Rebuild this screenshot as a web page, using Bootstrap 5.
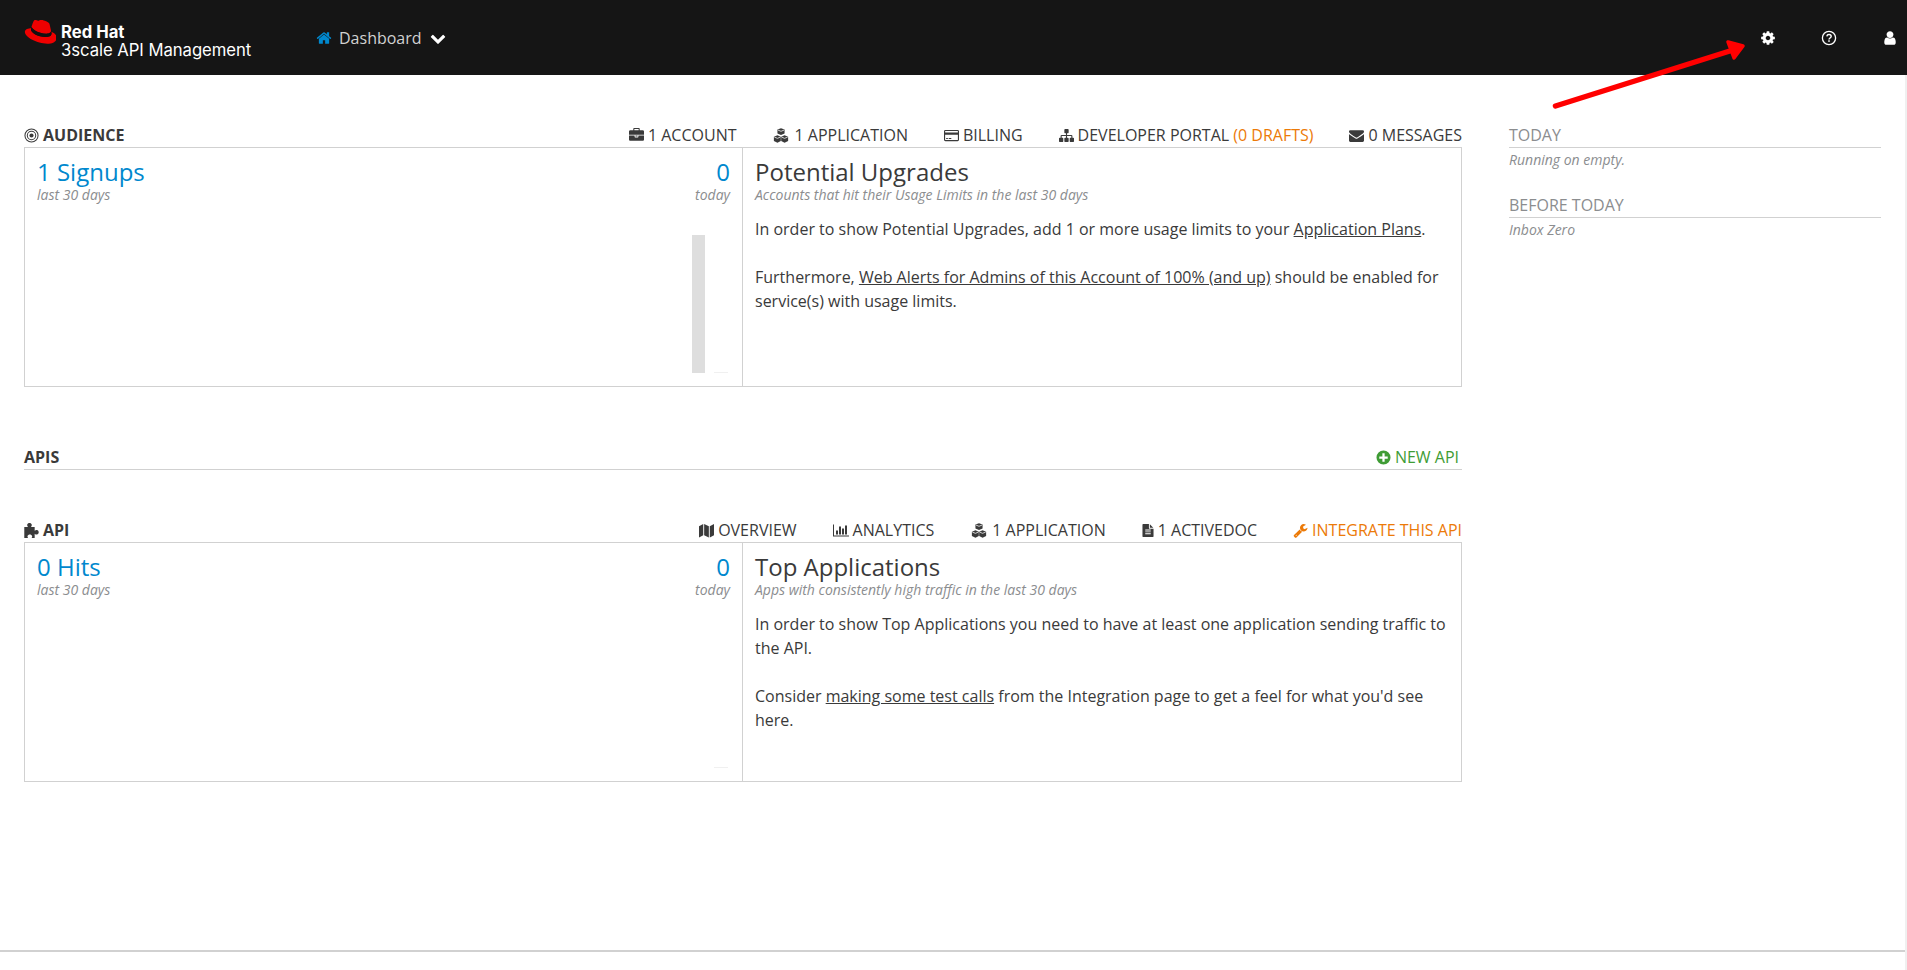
<!DOCTYPE html>
<html lang="en">
  <head>
    <meta charset="UTF-8" />
    <meta name="viewport" content="width=device-width, initial-scale=1.0" />
    <title>Dashboard | Red Hat 3scale API Management</title>
    <link
      href="https://cdn.jsdelivr.net/npm/bootstrap@5.3.3/dist/css/bootstrap.min.css"
      rel="stylesheet"
    />
    <style>
      html,
      body {
        height: 970px;
        overflow: hidden;
      }

      body {
        margin: 0;
        font-family: "Open Sans", "Liberation Sans", sans-serif;
        font-size: 16px;
        line-height: 24px;
        color: #3a3a3a;
        background: #f0f0f0;
      }

      .ico {
        width: 1em;
        height: 1em;
        fill: currentColor;
        flex: none;
      }

      /* top bar */
      .top-bar {
        height: 75px;
        background: #151515;
        padding: 0 9px 0 24px;
      }

      .brand-block {
        width: 292px;
        flex: none;
        color: #fff;
        font-family: Inter, "Liberation Sans", sans-serif;
        gap: 5px;
      }

      .brand-hat {
        width: 32px;
        height: 24px;
        margin-top: -12px;
        flex: none;
      }

      .brand-text {
        line-height: 18px;
        font-size: 16.7px;
        letter-spacing: -0.05px;
        padding-top: 6px;
        white-space: nowrap;
      }

      .brand-text b {
        display: block;
        font-weight: 700;
        letter-spacing: 0;
      }

      .dash-menu {
        color: #d1d1d1;
        gap: 8px;
      }

      .dash-menu .ico-home {
        color: #0088ce;
        font-size: 16px;
        margin-right: -1px;
      }

      .dash-menu .ico-chev {
        color: #fff;
        font-size: 16px;
      }

      .top-tools {
        color: #fff;
        gap: 45px;
        font-size: 16px;
      }

      /* page */
      .page-wrap {
        width: 1905px;
        height: 875px;
        background: #fff;
      }

      .page-cols {
        height: 875px;
        padding: 48px 24px 0;
        gap: 47px;
      }

      .main-col {
        width: 1438px;
      }

      .side-col {
        width: 372px;
      }

      .foot-rule {
        position: absolute;
        left: 0;
        top: 950px;
        width: 1905px;
        border-top: 2px solid #d1d1d1;
      }

      .white-foot {
        position: absolute;
        left: 0;
        top: 952px;
        width: 1905px;
        height: 18px;
        background: #fff;
      }

      .sec-head {
        height: 24px;
        white-space: nowrap;
      }

      .sec-title {
        font-weight: 700;
        gap: 4px;
        color: #3a3a3a;
      }

      .sec-title .ico {
        font-size: 15px;
      }

      .sec-links {
        gap: 36px;
      }

      .sec-link {
        gap: 4px;
      }

      .sec-link .ico {
        font-size: 15px;
      }

      .sec-link .ico-wide {
        width: 18px;
      }

      .sec-link .ico-bars {
        width: 16px;
      }

      .sec-link .ico-doc {
        width: 12px;
      }

      .tone-orange {
        color: #ec7a08;
      }

      .tone-green {
        color: #3f9c35;
      }

      .stat-box {
        height: 240px;
        border: 1px solid #d1d1d1;
      }

      .stat-left {
        width: 718px;
        padding: 9px 12px;
        border-right: 1px solid #d1d1d1;
      }

      .stat-right {
        flex: 1;
        padding: 9px 12px;
      }

      .stat-num {
        font-size: 24px;
        line-height: 30px;
        color: #0088ce;
      }

      .stat-sub {
        font-size: 14px;
        line-height: 16px;
        font-style: italic;
        color: #8b8d8f;
      }

      .stat-chart {
        height: 138px;
        margin-top: 32px;
        gap: 9px;
        padding-right: 2px;
      }

      .chart-bar {
        width: 13px;
        background: #dedede;
      }

      .chart-tick {
        width: 14px;
        height: 1px;
        background: #f0f0f0;
      }

      .panel-title {
        font-size: 24px;
        line-height: 30px;
        font-weight: 400;
        margin: 0;
        color: #3a3a3a;
      }

      .panel-copy {
        margin: 14px 0 0;
      }

      .panel-copy + .panel-copy {
        margin-top: 24px;
      }

      .panel-copy a {
        color: #3a3a3a;
      }

      .apis-head {
        margin-top: 58px;
        height: 25px;
        border-bottom: 1px solid #d1d1d1;
        padding-right: 3px;
      }

      .api-head {
        margin-top: 48px;
      }

      .side-title {
        height: 24px;
        color: #8b8d8f;
        border-bottom: 1px solid #d1d1d1;
        box-sizing: content-box;
      }

      .side-note {
        font-size: 14px;
        line-height: 23px;
        font-style: italic;
        color: #8b8d8f;
        margin-bottom: 22px;
      }

      .red-arrow {
        position: absolute;
        left: 1540px;
        top: 30px;
        width: 220px;
        height: 90px;
      }
    </style>
  </head>
  <body>
    <svg width="0" height="0" class="d-block position-absolute">
      <symbol id="i-cog" viewBox="0 0 1792 1792"><path d="M1152 896q0-106-75-181t-181-75-181 75-75 181 75 181 181 75 181-75 75-181zm512-109v222q0 12-8 23t-20 13l-185 28q-19 54-39 91 35 50 107 138 10 12 10 25t-9 23q-27 37-99 108t-94 71q-12 0-26-9l-138-108q-44 23-91 38-16 136-29 186-7 28-36 28h-222q-14 0-24.5-8.5t-11.5-21.5l-28-184q-49-16-90-37l-141 107q-10 9-25 9-14 0-25-11-126-114-165-168-7-10-7-23 0-12 8-23 15-21 51-66.5t54-70.5q-27-50-41-99l-183-27q-13-2-21-12.5t-8-23.5v-222q0-12 8-23t19-13l186-28q14-46 39-92-40-57-107-138-10-12-10-24 0-10 9-23 26-36 98.5-107.5t94.5-71.5q13 0 26 10l138 107q44-23 91-38 16-136 29-186 7-28 36-28h222q14 0 24.5 8.5t11.5 21.5l28 184q49 16 90 37l142-107q9-9 24-9 13 0 25 10 129 119 165 170 7 8 7 22 0 12-8 23-15 21-51 66.5t-54 70.5q26 50 41 98l183 28q13 2 21 12.5t8 23.5z"/></symbol>
      <symbol id="i-home" viewBox="0 0 1792 1792"><path d="M1472 992v480q0 26-19 45t-45 19h-384v-384h-256v384h-384q-26 0-45-19t-19-45v-480q0-1 .5-3t.5-3l575-474 575 474q1 2 1 6zm223-69l-62 74q-8 9-21 11h-3q-13 0-21-7l-692-577-692 577q-12 8-24 7-13-2-21-11l-62-74q-8-10-7-23.5t11-21.5l719-599q32-26 76-26t76 26l244 204v-195q0-14 9-23t23-9h192q14 0 23 9t9 23v408l219 182q10 8 11 21.5t-7 23.5z"/></symbol>
      <symbol id="i-user" viewBox="0 0 1792 1792"><path d="M1536 1399q0 109-62.5 187t-150.5 78h-854q-88 0-150.5-78t-62.5-187q0-85 8.5-160.5t31.5-152 58.5-131 94-89 134.5-34.5q131 128 313 128t313-128q76 0 134.5 34.5t94 89 58.5 131 31.5 152 8.5 160.5zm-256-887q0 159-112.5 271.5t-271.5 112.5-271.5-112.5-112.5-271.5 112.5-271.5 271.5-112.5 271.5 112.5 112.5 271.5z"/></symbol>
      <symbol id="i-chev" viewBox="0 0 1792 1792"><path d="M1683 808l-742 741q-19 19-45 19t-45-19l-742-741q-19-19-19-45.5t19-45.5l166-165q19-19 45-19t45 19l531 531 531-531q19-19 45-19t45 19l166 165q19 19 19 45.5t-19 45.5z"/></symbol>
      <symbol id="i-help" viewBox="0 0 16 16"><circle cx="8" cy="8" r="6.6" fill="none" stroke="currentColor" stroke-width="1.3"/><path d="M5.8 6.3c.2-1.2 1.1-1.8 2.2-1.8 1.3 0 2.2.8 2.2 1.8 0 1.7-2.2 1.6-2.2 3.2" fill="none" stroke="currentColor" stroke-width="1.4"/><rect x="7.2" y="10.3" width="1.6" height="1.5"/></symbol>
      <symbol id="i-case" viewBox="0 0 1792 1792"><path d="M640 256h512v-128h-512v128zm1152 640v480q0 66-47 113t-113 47h-1472q-66 0-113-47t-47-113v-480h672v160q0 26 19 45t45 19h320q26 0 45-19t19-45v-160h672zm-768 0v128h-256v-128h256zm768-480v384h-1792v-384q0-66 47-113t113-47h352v-160q0-40 28-68t68-28h576q40 0 68 28t28 68v160h352q66 0 113 47t47 113z"/></symbol>
      <symbol id="i-cubes" viewBox="0 0 16 16" preserveAspectRatio="xMidYMid meet"><path d="M8 .2l3.800 1.500v4.200L8 7.500 4.200 5.900V1.700zM4.200 7.800l3.600 1.500v4.500L4.200 15.800.4 13.800V9.300zM11.800 7.800l3.800 1.500v4.500l-3.800 2-3.600-2V9.300z"/><path d="M4.800 2.200L8 3.500l3.200-1.300M.9 9.700l3.300 1.300 3.100-1.300M8.700 9.700l3.100 1.300 3.300-1.300" fill="none" stroke="#fff" stroke-width=".8"/></symbol>
      <symbol id="i-card" viewBox="0 0 16 16"><path d="M1.500 2h13A1.500 1.500 0 0 1 16 3.500v9a1.500 1.500 0 0 1-1.500 1.500h-13A1.500 1.500 0 0 1 0 12.500v-9A1.500 1.500 0 0 1 1.500 2zM1.200 7.200v5.300c0 .2.100.3.300.3h13c.2 0 .3-.1.300-.3V7.200zM1.200 3.500v1.300h13.600V3.500c0-.2-.1-.3-.3-.3h-13c-.2 0-.3.100-.3.300zM2.300 10.700h1.800v1H2.300zM5 10.700h2.800v1H5z"/></symbol>
      <symbol id="i-site" viewBox="0 0 1792 1792"><path d="M1792 1248v320q0 40-28 68t-68 28h-320q-40 0-68-28t-28-68v-320q0-40 28-68t68-28h96v-192h-512v192h96q40 0 68 28t28 68v320q0 40-28 68t-68 28h-320q-40 0-68-28t-28-68v-320q0-40 28-68t68-28h96v-192h-512v192h96q40 0 68 28t28 68v320q0 40-28 68t-68 28h-320q-40 0-68-28t-28-68v-320q0-40 28-68t68-28h96v-192q0-52 38-90t90-38h512v-192h-96q-40 0-68-28t-28-68v-320q0-40 28-68t68-28h320q40 0 68 28t28 68v320q0 40-28 68t-68 28h-96v192h512q52 0 90 38t38 90v192h96q40 0 68 28t28 68z"/></symbol>
      <symbol id="i-mail" viewBox="0 0 1792 1792"><path d="M1792 710v794q0 66-47 113t-113 47h-1472q-66 0-113-47t-47-113v-794q44 49 101 87 362 246 497 345 57 42 92.5 65.5t94.5 48 110 24.5h2q51 0 110-24.5t94.5-48 92.5-65.5q170-123 498-345 57-39 100-87zm0-294q0 79-49 151t-122 123q-376 261-468 325-10 7-42.5 30.5t-54 38-52 32.5-57.5 27-50 9h-2q-23 0-50-9t-57.5-27-52-32.5-54-38-42.5-30.5q-91-64-262-182.500t-205-142.500q-62-42-117-115.500t-55-136.500q0-78 41.500-130t118.500-52h1472q65 0 112.500 47t47.500 113z"/></symbol>
      <symbol id="i-map" viewBox="0 0 16 16"><path d="M0 3.500L4.500 1v12L0 15.500zM5.500 1l5 2.500v12l-5-2.500zM11.500 3.500L16 1v12l-4.500 2.500z"/></symbol>
      <symbol id="i-bars" viewBox="0 0 2048 1792"><path d="M640 896v512h-256v-512h256zm384-512v1024h-256v-1024h256zm1024 1152v128h-2048v-1536h128v1408h1920zm-640-896v768h-256v-768h256zm384-384v1152h-256v-1152h256z"/></symbol>
      <symbol id="i-doc" viewBox="64 0 1664 1792"><path d="M1596 476q14 14 28 36h-472v-472q22 14 36 28zm-476 164h544v1056q0 40-28 68t-68 28h-1344q-40 0-68-28t-28-68v-1600q0-40 28-68t68-28h800v544q0 40 28 68t68 28zm160 736v-64q0-14-9-23t-23-9h-704q-14 0-23 9t-9 23v64q0 14 9 23t23 9h704q14 0 23-9t9-23zm0-256v-64q0-14-9-23t-23-9h-704q-14 0-23 9t-9 23v64q0 14 9 23t23 9h704q14 0 23-9t9-23zm0-256v-64q0-14-9-23t-23-9h-704q-14 0-23 9t-9 23v64q0 14 9 23t23 9h704q14 0 23-9t9-23z"/></symbol>
      <symbol id="i-wrench" viewBox="0 0 1792 1792"><path d="M448 1472q0-26-19-45t-45-19-45 19-19 45 19 45 45 19 45-19 19-45zm644-420l-682 682q-37 37-90 37-52 0-91-37l-106-108q-38-36-38-90 0-53 38-91l681-681q39 98 114.500 173.500t173.500 114.500zm634-435q0 39-23 106-47 134-164.500 217.500t-258.500 83.500q-185 0-316.500-131.500t-131.500-316.500 131.500-316.500 316.500-131.500q58 0 121.500 16.500t107.500 46.500q16 11 16 28t-16 28l-293 169v224l193 107q5-3 79-48.500t135.500-81 70.500-35.500q15 0 23.500 10t8.500 25z"/></symbol>
      <symbol id="i-puzzle" viewBox="1 1.500 12.500 13"><path d="M1 5h3.200C3.600 4.300 3.400 3.700 3.500 3.100 3.700 2 4.600 1.500 5.500 1.500S7.300 2 7.500 3.100c.1.600-.1 1.200-.7 1.900H10v3.200c.7-.6 1.300-.8 1.900-.7 1.100.2 1.600 1.100 1.600 2s-.5 1.800-1.600 2c-.6.1-1.200-.1-1.900-.7V14.500H7.300c.5-.7.600-1.200.5-1.700-.2-.9-1.100-1.400-2-1.400s-1.800.5-2 1.400c-.1.500 0 1 .5 1.700H1z"/></symbol>
      <symbol id="i-plus" viewBox="0 0 16 16"><path fill-rule="evenodd" d="M8 .5a7.500 7.500 0 1 1 0 15 7.500 7.500 0 0 1 0-15zM6.800 3.500v3.300H3.500v2.400h3.300v3.300h2.400V9.200h3.300V6.800H9.200V3.500z"/></symbol>
      <symbol id="i-target" viewBox="0 0 16 16"><circle cx="8" cy="8" r="7" fill="none" stroke="currentColor" stroke-width="1.100"/><circle cx="8" cy="8" r="4.500" fill="none" stroke="currentColor" stroke-width="1.100"/><circle cx="8" cy="8" r="2.200"/></symbol>
    </svg>

    <nav class="top-bar d-flex align-items-center">
      <div class="brand-block d-flex align-items-center">
        <svg class="brand-hat" viewBox="0 0 33 24" aria-hidden="true">
          <path fill="#e00" d="M22.500 13.800c2.200 0 5.400-.5 5.400-3 0-.2 0-.4-.1-.6l-1.300-5.700C26.200 3.200 26 2.600 23.800 1.500 22.100.6 18.400-.800 17.300-.800 16.300-.800 16 .5 14.800.5c-1.100 0-2-1-3.100-1-1 0-1.700.7-2.200 2.100 0 0-1.500 4.200-1.700 4.800v.4c0 1.600 6.300 6.900 14.700 6.900z"/>
          <path fill="#e00" d="M28.100 11.800c.3 1.400.3 1.500.3 1.700 0 2.400-2.700 3.700-6.200 3.700-8 0-15-4.700-15-7.800 0-.4.100-.9.300-1.300C4.600 8.300.9 8.800.9 12.100c0 5.400 12.800 12 23 12 7.800 0 9.800-3.500 9.800-6.300 0-2.200-1.900-4.700-5.600-6z"/>
          <path fill="#111" d="M28.100 11.800c.3 1.400.3 1.500.3 1.700 0 2.400-2.700 3.700-6.200 3.700-8 0-15-4.700-15-7.800 0-.4.100-.9.300-1.300l.6-1.600v.4c0 1.600 6.300 6.900 14.700 6.900 2.200 0 5.400-.5 5.400-3 0-.2 0-.4-.1-.6z"/>
        </svg>
        <div class="brand-text"><b>Red Hat</b>3scale API Management</div>
      </div>
      <div class="dash-menu d-flex align-items-center">
        <svg class="ico ico-home"><use href="#i-home" /></svg>
        <span>Dashboard</span>
        <svg class="ico ico-chev"><use href="#i-chev" /></svg>
      </div>
      <div class="top-tools d-flex align-items-center ms-auto">
        <svg class="ico"><use href="#i-cog" /></svg>
        <svg class="ico"><use href="#i-help" /></svg>
        <svg class="ico"><use href="#i-user" /></svg>
      </div>
    </nav>

    <div class="page-wrap">
      <div class="page-cols d-flex">
        <main class="main-col">
          <div class="sec-head d-flex justify-content-between align-items-center">
            <div class="sec-title d-flex align-items-center">
              <svg class="ico"><use href="#i-target" /></svg>AUDIENCE
            </div>
            <div class="sec-links d-flex">
              <span class="sec-link d-flex align-items-center"><svg class="ico"><use href="#i-case" /></svg>1 ACCOUNT</span>
              <span class="sec-link d-flex align-items-center"><svg class="ico ico-wide"><use href="#i-cubes" /></svg>1 APPLICATION</span>
              <span class="sec-link d-flex align-items-center"><svg class="ico"><use href="#i-card" /></svg>BILLING</span>
              <span class="sec-link d-flex align-items-center"><svg class="ico"><use href="#i-site" /></svg><span>DEVELOPER PORTAL <span class="tone-orange">(0 DRAFTS)</span></span></span>
              <span class="sec-link d-flex align-items-center"><svg class="ico"><use href="#i-mail" /></svg>0 MESSAGES</span>
            </div>
          </div>
          <div class="stat-box d-flex">
            <div class="stat-left">
              <div class="d-flex justify-content-between">
                <div>
                  <div class="stat-num">1 Signups</div>
                  <div class="stat-sub">last 30 days</div>
                </div>
                <div class="text-end">
                  <div class="stat-num">0</div>
                  <div class="stat-sub">today</div>
                </div>
              </div>
              <div class="stat-chart d-flex justify-content-end align-items-end">
                <div class="chart-bar h-100"></div>
                <div class="chart-tick"></div>
              </div>
            </div>
            <div class="stat-right">
              <h2 class="panel-title">Potential Upgrades</h2>
              <div class="stat-sub">Accounts that hit their Usage Limits in the last 30 days</div>
              <p class="panel-copy">In order to show Potential Upgrades, add 1 or more usage limits to your <a href="#">Application Plans</a>.</p>
              <p class="panel-copy">Furthermore, <a href="#">Web Alerts for Admins of this Account of 100% (and up)</a> should be enabled for service(s) with usage limits.</p>
            </div>
          </div>

          <div class="apis-head sec-head d-flex justify-content-between">
            <div class="sec-title">APIS</div>
            <span class="sec-link tone-green d-flex align-items-center"><svg class="ico"><use href="#i-plus" /></svg>NEW API</span>
          </div>

          <div class="api-head sec-head d-flex justify-content-between align-items-center">
            <div class="sec-title d-flex align-items-center">
              <svg class="ico"><use href="#i-puzzle" /></svg>API
            </div>
            <div class="sec-links d-flex">
              <span class="sec-link d-flex align-items-center"><svg class="ico"><use href="#i-map" /></svg>OVERVIEW</span>
              <span class="sec-link d-flex align-items-center"><svg class="ico ico-bars"><use href="#i-bars" /></svg>ANALYTICS</span>
              <span class="sec-link d-flex align-items-center"><svg class="ico ico-wide"><use href="#i-cubes" /></svg>1 APPLICATION</span>
              <span class="sec-link d-flex align-items-center"><svg class="ico ico-doc"><use href="#i-doc" /></svg>1 ACTIVEDOC</span>
              <span class="sec-link tone-orange d-flex align-items-center"><svg class="ico"><use href="#i-wrench" /></svg>INTEGRATE THIS API</span>
            </div>
          </div>
          <div class="stat-box d-flex">
            <div class="stat-left">
              <div class="d-flex justify-content-between">
                <div>
                  <div class="stat-num">0 Hits</div>
                  <div class="stat-sub">last 30 days</div>
                </div>
                <div class="text-end">
                  <div class="stat-num">0</div>
                  <div class="stat-sub">today</div>
                </div>
              </div>
              <div class="stat-chart d-flex justify-content-end align-items-end">
                <div class="chart-tick"></div>
              </div>
            </div>
            <div class="stat-right">
              <h2 class="panel-title">Top Applications</h2>
              <div class="stat-sub">Apps with consistently high traffic in the last 30 days</div>
              <p class="panel-copy">In order to show Top Applications you need to have at least one application sending traffic to the API.</p>
              <p class="panel-copy">Consider <a href="#">making some test calls</a> from the Integration page to get a feel for what you'd see here.</p>
            </div>
          </div>
        </main>

        <aside class="side-col">
          <div class="side-title">TODAY</div>
          <div class="side-note">Running on empty.</div>
          <div class="side-title">BEFORE TODAY</div>
          <div class="side-note">Inbox Zero</div>
        </aside>
      </div>
    </div>

    <div class="foot-rule"></div>
    <div class="white-foot"></div>

    <svg class="red-arrow" viewBox="0 0 220 90" aria-hidden="true">
      <path d="M15.500 76L193 20" stroke="#f00" stroke-width="5.500" stroke-linecap="round" fill="none"/>
      <path d="M188 12L203 16 194 28z" fill="#f00" stroke="#f00" stroke-width="3.500" stroke-linejoin="round"/>
    </svg>

    <script src="https://cdn.jsdelivr.net/npm/bootstrap@5.3.3/dist/js/bootstrap.bundle.min.js"></script>
  </body>
</html>
